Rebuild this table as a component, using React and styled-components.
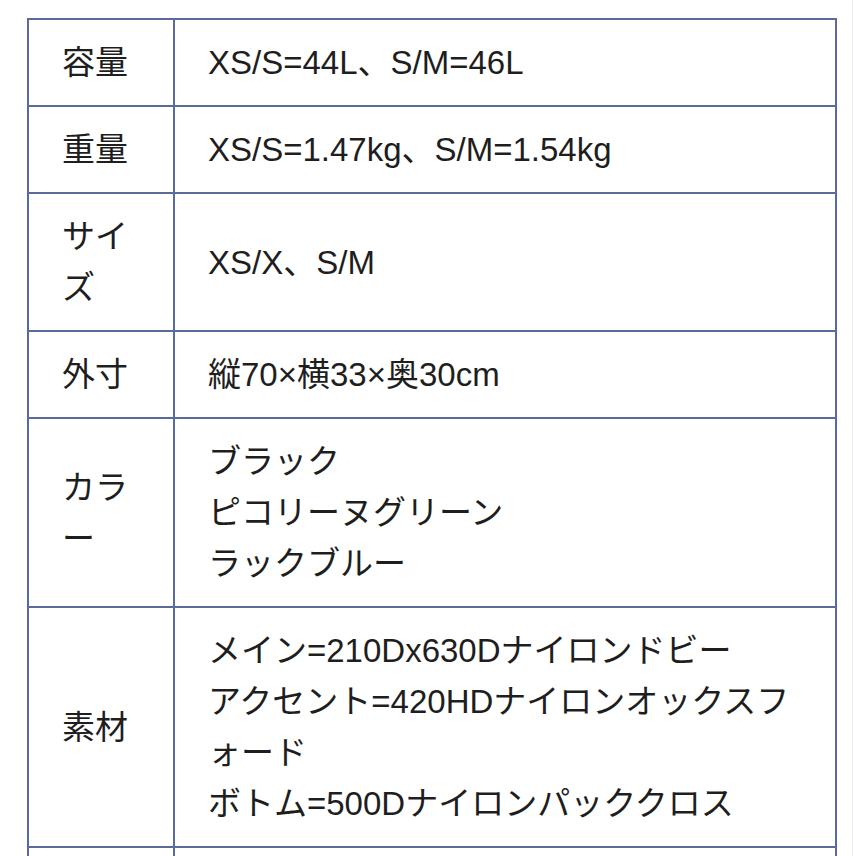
import styled, { createGlobalStyle } from "styled-components";

const GlobalStyle = createGlobalStyle`
    html, body {
        margin: 0;
        padding: 0;
        background: #ffffff;
    }
    body {
        font-family: "Liberation Sans", "Noto Sans CJK JP", sans-serif;
        color: #1e1e1e;
    }
`

const Page = styled.div`
    width: 853px;
    height: 856px;
    overflow: hidden;
    border-right: 1px solid #ececec;
    padding: 18px 0 0 27px;
    box-sizing: border-box;
`

const SpecTable = styled.table`
    width: 810px;
    border-collapse: collapse;
    table-layout: fixed;
    font-size: 33px;
    line-height: 51px;
    line-break: loose;
`

const HeadCell = styled.th`
    width: 146px;
    box-sizing: border-box;
    border: 2px solid #5b6a9c;
    padding: 17px 30px 17px 33px;
    text-align: left;
    vertical-align: middle;
    font-weight: 400;
    background: #ffffff;
`

const ValueCell = styled.td`
    border: 2px solid #5b6a9c;
    padding: 17px 30px 17px 33px;
    text-align: left;
    vertical-align: middle;
    background: #ffffff;
    height: ${p => p.$empty ? "52px" : "auto"};
`

const Line = styled.div`
    white-space: normal;
`

const specs = [
    {label: "容量", lines: ["XS/S=44L、S/M=46L"]},
    {label: "重量", lines: ["XS/S=1.47kg、S/M=1.54kg"]},
    {label: "サイズ", lines: ["XS/X、S/M"]},
    {label: "外寸", lines: ["縦70×横33×奥30cm"]},
    {label: "カラー", lines: ["ブラック", "ピコリーヌグリーン", "ラックブルー"]},
    {label: "素材", lines: [
        "メイン=210Dx630Dナイロンドビー",
        "アクセント=420HDナイロンオックスフォード",
        "ボトム=500Dナイロンパッククロス",
    ]},
]

const App = () => {
    return (
        <>
            <GlobalStyle/>
            <Page>
                <SpecTable>
                    <tbody>
                    {specs.map(spec => (
                        <tr key={spec.label}>
                            <HeadCell>{spec.label}</HeadCell>
                            <ValueCell>
                                {spec.lines.map(line => <Line key={line}>{line}</Line>)}
                            </ValueCell>
                        </tr>
                    ))}
                    <tr>
                        <HeadCell/>
                        <ValueCell $empty/>
                    </tr>
                    </tbody>
                </SpecTable>
            </Page>
        </>
    )
}

export default App;
